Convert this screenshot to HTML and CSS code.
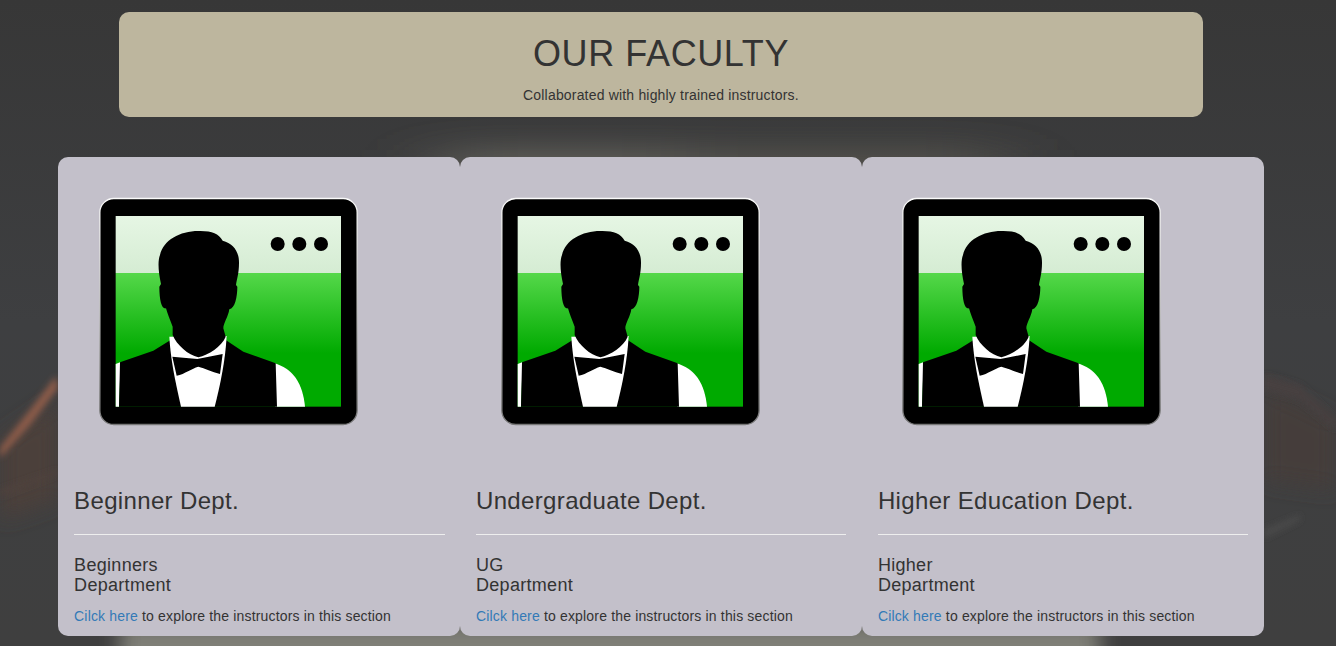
FILE: index.html
```html
<!DOCTYPE html>
<html lang="en">
<head>
<meta charset="utf-8">
<title>Our Faculty</title>
<link rel="stylesheet" href="styles.css">
</head>
<body>
<svg class="defs" width="0" height="0" aria-hidden="true">
  <defs>
    <linearGradient id="frame" x1="0" y1="0" x2="0" y2="1"><stop offset="0" stop-color="#fafafa"/><stop offset=".5" stop-color="#c4c4c4"/><stop offset="1" stop-color="#777"/></linearGradient>
    <linearGradient id="sky" x1="0" y1="0" x2="0" y2="1"><stop offset="0" stop-color="#e6f6e4"/><stop offset="1" stop-color="#d5ecd3"/></linearGradient>
    <linearGradient id="grass" x1="0" y1="0" x2="0" y2="1"><stop offset="0" stop-color="#55d84a"/><stop offset=".6" stop-color="#00aa00"/><stop offset="1" stop-color="#00aa00"/></linearGradient>
    <symbol id="tux" viewBox="0 0 900 780">
      <rect x="59.5" y="55.5" width="772" height="678" rx="42" fill="#000" stroke="url(#frame)" stroke-width="4"/>
      <rect x="107" y="108" width="676" height="171" fill="url(#sky)"/>
      <rect x="107" y="279" width="676" height="401" fill="url(#grass)"/>
      <circle cx="593" cy="192" r="21"/><circle cx="658" cy="192" r="21"/><circle cx="723" cy="192" r="21"/>
      <path fill="#fff" d="M107 552L122 546L117 680H107Z"/>
      <path fill="#fff" d="M580 549C640 565 668 610 675 680H585Z"/>
      <path d="M120 547L220 512L272 480H437L490 515L587 550L591 680H117Z"/>
      <path fill="#fff" d="M268 470C272 540 285 600 303 680H404C422 610 436 540 440 468Z"/>
      <path d="M278 465V440C270 420 262 400 258 385C245 388 238 360 238 320L243 312C236 280 232 245 240 225C250 180 300 153 355 153C395 152 415 160 428 182C460 190 478 215 477 250C477 280 470 300 468 315L472 320C472 350 465 385 448 388C445 410 430 430 430 445L437 470C425 500 385 525 355 532C325 525 290 495 278 465Z"/>
      <path d="M277 530L352 537L428 522L420 582C395 575 375 565 355 560C335 565 315 582 290 587Z"/>
    </symbol>
  </defs>
</svg>
<svg class="backdrop" viewBox="0 0 1336 646" preserveAspectRatio="none" aria-hidden="true">
  <defs>
    <filter id="wide" x="-30%" y="-200%" width="160%" height="500%"><feGaussianBlur stdDeviation="40 16"/></filter>
    <filter id="soft" x="-20%" y="-20%" width="140%" height="140%"><feGaussianBlur stdDeviation="10"/></filter>
    <filter id="softer" x="-20%" y="-20%" width="140%" height="140%"><feGaussianBlur stdDeviation="3"/></filter>
    <linearGradient id="base" x1="0" y1="0" x2="0" y2="1"><stop offset="0" stop-color="#373737"/><stop offset=".5" stop-color="#3e3f41"/><stop offset="1" stop-color="#3f3f3f"/></linearGradient>
  </defs>
  <rect width="1336" height="646" fill="url(#base)"/>
  <g filter="url(#wide)">
    <rect x="440" y="150" width="240" height="50" fill="#62615a"/>
    <rect x="680" y="150" width="320" height="50" fill="#54534d"/>
  </g>
  <g filter="url(#soft)">
    <rect x="120" y="622" width="980" height="50" fill="#7f7f77"/>
    <path d="M0 440L58 400V500L0 520Z" fill="#4b3f3b"/>
    <path d="M1264 385L1336 420V490L1264 480Z" fill="#443d3b"/>
  </g>
  <g filter="url(#softer)">
    <path d="M0 448L30 410L56 376L58 388L30 425L0 458Z" fill="#8d5c49"/>
    <path d="M1264 375L1300 385L1336 420V430L1300 400L1264 390Z" fill="#474040"/>
    <path d="M1264 530L1300 515V520L1264 538Z" fill="#4b4b4b"/>
    <path d="M0 490L58 470V474L0 496Z" fill="#4f423e"/>
  </g>
</svg>
<div class="page">
  <header class="banner">
    <h1>OUR FACULTY</h1>
    <p>Collaborated with highly trained instructors.</p>
  </header>
  <main class="cards">
    <article class="card">
      <svg class="portrait" viewBox="0 0 900 780" aria-hidden="true"><use href="#tux"/></svg>
      <h3>Beginner Dept.</h3>
      <hr>
      <h4>Beginners<br>Department</h4>
      <p><a href="#">Cilck here</a> to explore the instructors in this section</p>
    </article>
    <article class="card">
      <svg class="portrait" viewBox="0 0 900 780" aria-hidden="true"><use href="#tux"/></svg>
      <h3>Undergraduate Dept.</h3>
      <hr>
      <h4>UG<br>Department</h4>
      <p><a href="#">Cilck here</a> to explore the instructors in this section</p>
    </article>
    <article class="card">
      <svg class="portrait" viewBox="0 0 900 780" aria-hidden="true"><use href="#tux"/></svg>
      <h3>Higher Education Dept.</h3>
      <hr>
      <h4>Higher<br>Department</h4>
      <p><a href="#">Cilck here</a> to explore the instructors in this section</p>
    </article>
  </main>
</div>
</body>
</html>
```
FILE: styles.css
```css
* { box-sizing: border-box; }
html, body { margin: 0; height: 646px; overflow: hidden; background: #fff; }
body { font-family: "Liberation Sans", Arial, sans-serif; font-size: 14px; line-height: 20px; color: #333; position: relative; }
.defs { position: absolute; }
.backdrop { position: absolute; left: 0; top: 0; width: 1336px; height: 646px; }
.page { position: relative; width: 1336px; padding: 12px 0 0 58.1px; }
.banner { width: 1084px; height: 105px; margin-left: 60.9px; padding-top: 22px; background: #bdb69e; border-radius: 10px; text-align: center; }
.banner h1 { margin: 0 0 11px; font-size: 36px; font-weight: 400; line-height: 40px; letter-spacing: .62px; }
.banner p { margin: 0; letter-spacing: .18px; }
.cards { display: flex; width: 1206px; margin-top: 40px; }
.card { flex: none; width: 401.9px; height: 479px; padding: 23px 15.4px 10px 16px; background: #c3c0ca; border-radius: 10px; }
.portrait { display: block; width: 300px; height: 260px; margin: 0 0 47px 5.6px; }
.card h3 { margin: 0; font-size: 24px; font-weight: 400; line-height: 27px; letter-spacing: .35px; }
.card hr { height: 1px; margin: 20px 0; border: 0; background: #eee; }
.card h4 { margin: 0 0 11px; font-size: 18px; font-weight: 400; line-height: 20px; letter-spacing: .3px; }
.card p { margin: 0; letter-spacing: .165px; }
.card a { color: #337ab7; text-decoration: none; }
```
